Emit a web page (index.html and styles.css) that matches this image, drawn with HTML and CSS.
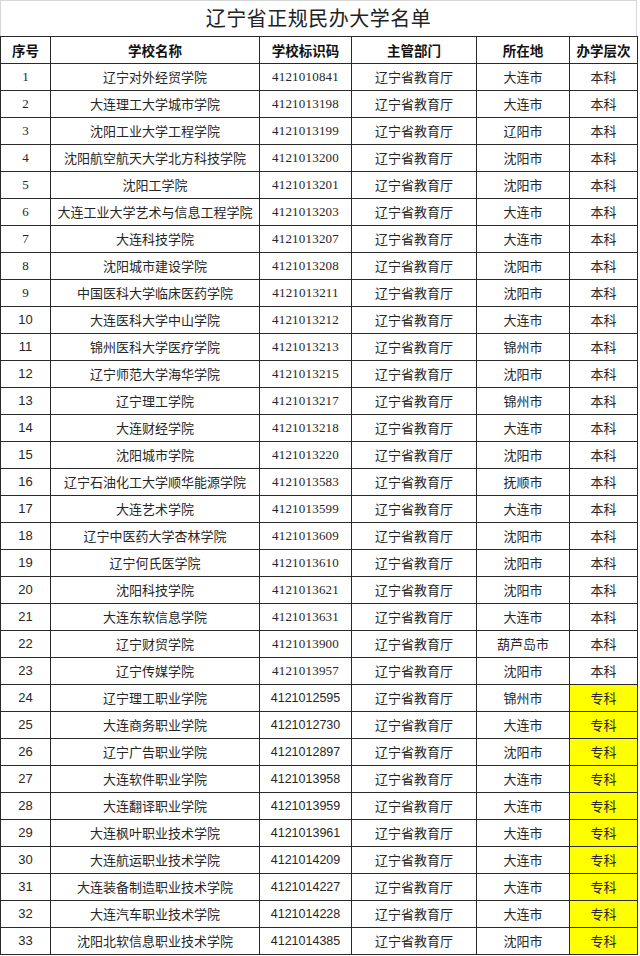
FILE: index.html
```html
<!DOCTYPE html>
<html lang="zh-CN">
<head>
<meta charset="utf-8">
<title>辽宁省正规民办大学名单</title>
<link rel="stylesheet" href="styles.css">
</head>
<body>
<div class="sheet">
  <div class="title">辽宁省正规民办大学名单</div>
  <table class="list">
    <colgroup>
      <col class="c-no"><col class="c-name"><col class="c-code"><col class="c-dept"><col class="c-city"><col class="c-level">
    </colgroup>
    <thead>
      <tr><th>序号</th><th>学校名称</th><th>学校标识码</th><th>主管部门</th><th>所在地</th><th>办学层次</th></tr>
    </thead>
    <tbody>
      <tr><td class="no serif">1</td><td>辽宁对外经贸学院</td><td class="code">4121010841</td><td>辽宁省教育厅</td><td>大连市</td><td>本科</td></tr>
      <tr><td class="no serif">2</td><td>大连理工大学城市学院</td><td class="code">4121013198</td><td>辽宁省教育厅</td><td>大连市</td><td>本科</td></tr>
      <tr><td class="no serif">3</td><td>沈阳工业大学工程学院</td><td class="code">4121013199</td><td>辽宁省教育厅</td><td>辽阳市</td><td>本科</td></tr>
      <tr><td class="no serif">4</td><td>沈阳航空航天大学北方科技学院</td><td class="code">4121013200</td><td>辽宁省教育厅</td><td>沈阳市</td><td>本科</td></tr>
      <tr><td class="no serif">5</td><td>沈阳工学院</td><td class="code">4121013201</td><td>辽宁省教育厅</td><td>沈阳市</td><td>本科</td></tr>
      <tr><td class="no serif">6</td><td>大连工业大学艺术与信息工程学院</td><td class="code">4121013203</td><td>辽宁省教育厅</td><td>大连市</td><td>本科</td></tr>
      <tr><td class="no serif">7</td><td>大连科技学院</td><td class="code">4121013207</td><td>辽宁省教育厅</td><td>大连市</td><td>本科</td></tr>
      <tr><td class="no serif">8</td><td>沈阳城市建设学院</td><td class="code">4121013208</td><td>辽宁省教育厅</td><td>沈阳市</td><td>本科</td></tr>
      <tr><td class="no serif">9</td><td>中国医科大学临床医药学院</td><td class="code">4121013211</td><td>辽宁省教育厅</td><td>沈阳市</td><td>本科</td></tr>
      <tr><td class="no">10</td><td>大连医科大学中山学院</td><td class="code">4121013212</td><td>辽宁省教育厅</td><td>大连市</td><td>本科</td></tr>
      <tr><td class="no">11</td><td>锦州医科大学医疗学院</td><td class="code">4121013213</td><td>辽宁省教育厅</td><td>锦州市</td><td>本科</td></tr>
      <tr><td class="no">12</td><td>辽宁师范大学海华学院</td><td class="code">4121013215</td><td>辽宁省教育厅</td><td>沈阳市</td><td>本科</td></tr>
      <tr><td class="no">13</td><td>辽宁理工学院</td><td class="code">4121013217</td><td>辽宁省教育厅</td><td>锦州市</td><td>本科</td></tr>
      <tr><td class="no">14</td><td>大连财经学院</td><td class="code">4121013218</td><td>辽宁省教育厅</td><td>大连市</td><td>本科</td></tr>
      <tr><td class="no">15</td><td>沈阳城市学院</td><td class="code">4121013220</td><td>辽宁省教育厅</td><td>沈阳市</td><td>本科</td></tr>
      <tr><td class="no">16</td><td>辽宁石油化工大学顺华能源学院</td><td class="code">4121013583</td><td>辽宁省教育厅</td><td>抚顺市</td><td>本科</td></tr>
      <tr><td class="no">17</td><td>大连艺术学院</td><td class="code">4121013599</td><td>辽宁省教育厅</td><td>大连市</td><td>本科</td></tr>
      <tr><td class="no">18</td><td>辽宁中医药大学杏林学院</td><td class="code">4121013609</td><td>辽宁省教育厅</td><td>沈阳市</td><td>本科</td></tr>
      <tr><td class="no">19</td><td>辽宁何氏医学院</td><td class="code">4121013610</td><td>辽宁省教育厅</td><td>沈阳市</td><td>本科</td></tr>
      <tr><td class="no">20</td><td>沈阳科技学院</td><td class="code">4121013621</td><td>辽宁省教育厅</td><td>沈阳市</td><td>本科</td></tr>
      <tr><td class="no">21</td><td>大连东软信息学院</td><td class="code">4121013631</td><td>辽宁省教育厅</td><td>大连市</td><td>本科</td></tr>
      <tr><td class="no">22</td><td>辽宁财贸学院</td><td class="code">4121013900</td><td>辽宁省教育厅</td><td>葫芦岛市</td><td>本科</td></tr>
      <tr><td class="no">23</td><td>辽宁传媒学院</td><td class="code">4121013957</td><td>辽宁省教育厅</td><td>沈阳市</td><td>本科</td></tr>
      <tr><td class="no">24</td><td>辽宁理工职业学院</td><td class="code sans">4121012595</td><td>辽宁省教育厅</td><td>锦州市</td><td class="hl">专科</td></tr>
      <tr><td class="no">25</td><td>大连商务职业学院</td><td class="code sans">4121012730</td><td>辽宁省教育厅</td><td>大连市</td><td class="hl">专科</td></tr>
      <tr><td class="no">26</td><td>辽宁广告职业学院</td><td class="code sans">4121012897</td><td>辽宁省教育厅</td><td>沈阳市</td><td class="hl">专科</td></tr>
      <tr><td class="no">27</td><td>大连软件职业学院</td><td class="code sans">4121013958</td><td>辽宁省教育厅</td><td>大连市</td><td class="hl">专科</td></tr>
      <tr><td class="no">28</td><td>大连翻译职业学院</td><td class="code sans">4121013959</td><td>辽宁省教育厅</td><td>大连市</td><td class="hl">专科</td></tr>
      <tr><td class="no">29</td><td>大连枫叶职业技术学院</td><td class="code sans">4121013961</td><td>辽宁省教育厅</td><td>大连市</td><td class="hl">专科</td></tr>
      <tr><td class="no">30</td><td>大连航运职业技术学院</td><td class="code sans">4121014209</td><td>辽宁省教育厅</td><td>大连市</td><td class="hl">专科</td></tr>
      <tr><td class="no">31</td><td>大连装备制造职业技术学院</td><td class="code sans">4121014227</td><td>辽宁省教育厅</td><td>大连市</td><td class="hl">专科</td></tr>
      <tr><td class="no">32</td><td>大连汽车职业技术学院</td><td class="code sans">4121014228</td><td>辽宁省教育厅</td><td>大连市</td><td class="hl">专科</td></tr>
      <tr><td class="no">33</td><td>沈阳北软信息职业技术学院</td><td class="code sans">4121014385</td><td>辽宁省教育厅</td><td>沈阳市</td><td class="hl">专科</td></tr>
    </tbody>
  </table>
</div>
</body>
</html>
```
FILE: styles.css
```css
html, body {
  margin: 0;
  padding: 0;
  background: #ffffff;
}
body {
  font-family: "Noto Sans CJK SC", "Noto Sans", sans-serif;
  color: #1e1e1e;
  width: 640px;
  height: 956px;
  overflow: hidden;
}
.sheet {
  width: 637px;
}
.title {
  height: 36px;
  box-sizing: border-box;
  border-top: 1px solid #d6d6d6;
  border-left: 1px solid #d6d6d6;
  border-right: 1px solid #d6d6d6;
  text-align: center;
  font-size: 20px;
  line-height: 34px;
  letter-spacing: 0.5px;
  color: #222;
}
.list {
  border-collapse: collapse;
  table-layout: fixed;
  width: 637px;
}
.c-no { width: 50px; }
.c-name { width: 209px; }
.c-code { width: 92px; }
.c-dept { width: 125px; }
.c-city { width: 93px; }
.c-level { width: 68px; }
.list th, .list td {
  border: 1px solid #2a2a2a;
  height: 26px;
  padding: 0;
  text-align: center;
  vertical-align: middle;
  font-size: 13px;
  line-height: 26px;
  white-space: nowrap;
  overflow: hidden;
}
.list th {
  font-weight: bold;
  font-size: 13.5px;
  color: #111;
}
.list td {
  color: #262626;
}
.list td.no {
  font-family: "Liberation Sans", sans-serif;
  font-size: 13px;
}
.list td.no.serif {
  font-family: "Liberation Serif", serif;
}
.list td.code {
  font-family: "Liberation Serif", serif;
  font-size: 13px;
  letter-spacing: 0.2px;
}
.list td.code.sans {
  font-family: "Liberation Sans", sans-serif;
  font-size: 12.5px;
  letter-spacing: 0;
}
.list td.hl {
  background: #ffff00;
}
```
